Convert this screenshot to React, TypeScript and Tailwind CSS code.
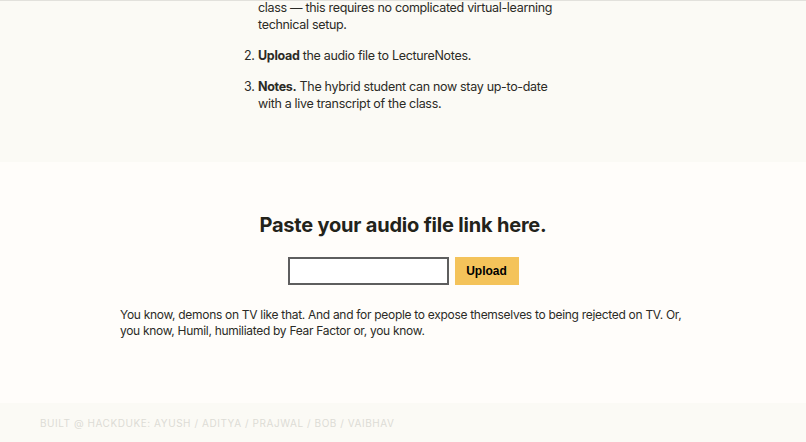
export default function App() {
  return (
    <div
      className="min-h-[442px] bg-[#fffdfa] text-[#2b2b26]"
      style={{ fontFamily: "Inter, 'Noto Sans', sans-serif" }}
    >
      {/* HOW IT WORKS (scrolled) */}

      <section className="border-t border-[#e2e1dc] bg-[#fbfaf5] pb-[50px]">
        <div className="mx-auto w-[318px] text-[12.5px] leading-[17px] tracking-[-0.025em]">
          <p className="-mt-[2px] pl-[14px]">
            class — this requires no complicated virtual-learning technical setup.
          </p>

          <ol className="mt-[14px] space-y-[14px]" start={2}>
            <li className="flex">
              <span className="w-[14px] shrink-0">2.</span>
              <span>
                <b>Upload</b> the audio file to LectureNotes.
              </span>
            </li>
            <li className="flex">
              <span className="w-[14px] shrink-0">3.</span>
              <span>
                <b>Notes.</b> The hybrid student can now stay up-to-date with a live transcript of the class.
              </span>
            </li>
          </ol>
        </div>
      </section>

      {/* UPLOAD */}

      <section className="flex flex-col items-center pt-[48px] pb-[64px]">
        <h2 className="text-[20px] font-bold tracking-[-0.01em] text-[#23231a]">
          Paste your audio file link here.
        </h2>

        <div className="mt-[17px] flex gap-[6px]">
          <input
            type="text"
            className="h-[28px] w-[161px] border-2 border-[#5e5e5e] bg-white px-2 text-[13px] outline-none"
          />
          <button
            className="h-[28px] w-[64px] bg-[#f4c35a] text-[12px] font-bold text-black"
            style={{ fontFamily: "'Liberation Sans', Arial, sans-serif" }}
          >
            Upload
          </button>
        </div>

        <p className="mt-[22px] w-[566px] text-[12px] leading-[16px] tracking-[-0.025em] text-[#2b2b26]">
          You know, demons on TV like that. And and for people to expose themselves to being rejected on TV. Or, you know, Humil, humiliated by Fear Factor or, you know.
        </p>
      </section>

      {/* FOOTER */}

      <footer className="bg-[#fbfaf5] px-[40px] py-[13px]">
        <p className="text-[10px] uppercase tracking-[0.055em] text-[#dddcd6]">
          Built @ HackDuke: Ayush / Aditya / Prajwal / Bob / Vaibhav
        </p>
      </footer>
    </div>
  );
}
